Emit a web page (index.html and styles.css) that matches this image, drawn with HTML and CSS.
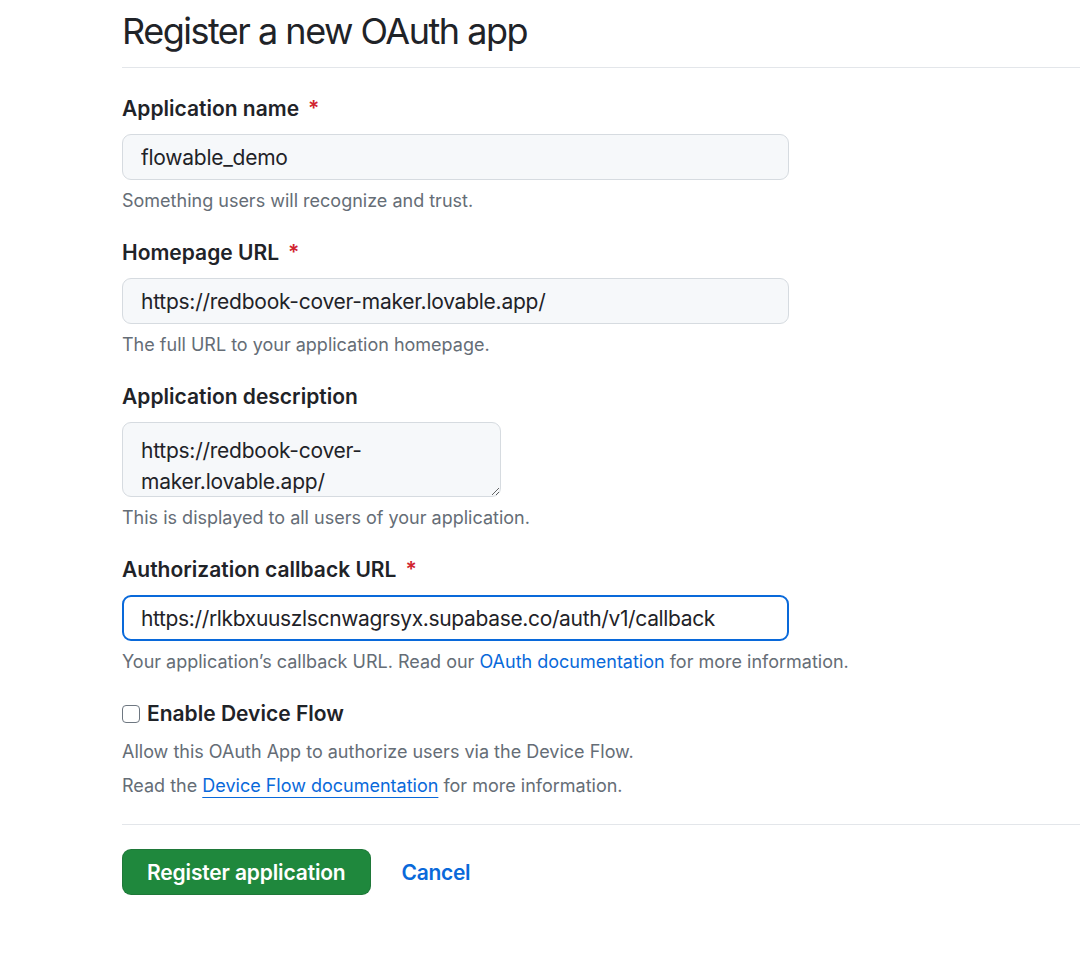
FILE: index.html
```html
<!DOCTYPE html>
<html lang="en">
<head>
<meta charset="utf-8">
<title>Register a new OAuth app</title>
<link rel="stylesheet" href="styles.css">
</head>
<body>
<div class="page">
  <div class="header">
    <h1 class="title">Register a new OAuth app</h1>
  </div>
  <form class="form">
    <div class="group">
      <label class="lbl">Application name<span class="req">*</span></label>
      <input class="field" type="text" value="flowable_demo">
      <p class="note">Something users will recognize and trust.</p>
    </div>
    <div class="group">
      <label class="lbl">Homepage URL<span class="req">*</span></label>
      <input class="field" type="text" value="https://redbook-cover-maker.lovable.app/">
      <p class="note">The full URL to your application homepage.</p>
    </div>
    <div class="group">
      <label class="lbl">Application description</label>
      <textarea class="area">https://redbook-cover-maker.lovable.app/</textarea>
      <p class="note">This is displayed to all users of your application.</p>
    </div>
    <div class="group">
      <label class="lbl">Authorization callback URL<span class="req">*</span></label>
      <input class="field focused" type="text" value="https://rlkbxuuszlscnwagrsyx.supabase.co/auth/v1/callback">
      <p class="note">Your application’s callback URL. Read our <a class="link" href="#">OAuth documentation</a> for more information.</p>
    </div>
    <div class="group check-group">
      <label class="check-lbl"><input class="box" type="checkbox"><span>Enable Device Flow</span></label>
      <p class="note">Allow this OAuth App to authorize users via the Device Flow.</p>
      <p class="note second">Read the <a class="link under" href="#">Device Flow documentation</a> for more information.</p>
    </div>
    <div class="actions">
      <button class="btn" type="button">Register application</button>
      <a class="cancel" href="#">Cancel</a>
    </div>
  </form>
</div>
</body>
</html>
```
FILE: styles.css
```css
* { box-sizing: border-box; }
html, body { margin: 0; padding: 0; background: #ffffff; }
body {
  font-family: Inter, "Liberation Sans", Arial, sans-serif;
  color: #1f2328;
}
.page {
  padding-left: 122px;
  padding-top: 4px;
}
.header {
  border-bottom: 1px solid #e3e6ea;
  padding-bottom: 9px;
}
.title {
  margin: 0;
  font-size: 36px;
  font-weight: 400;
  line-height: 54px;
  letter-spacing: -1.5px;
  color: #1f2328;
}
.form {
  padding-top: 26px;
}
.group {
  display: flex;
  flex-direction: column;
  align-items: flex-start;
  margin-bottom: 24px;
}
.lbl, .check-lbl {
  font-size: 21px;
  font-weight: 600;
  line-height: 30px;
  color: #1f2328;
}
.req {
  color: #d1242f;
  margin-left: 9px;
}
.field {
  margin-top: 10px;
  width: 667px;
  height: 46px;
  padding: 0 18px;
  border: 1px solid #d6dbe0;
  border-radius: 9px;
  background: #f6f8fa;
  font-family: inherit;
  font-size: 21px;
  letter-spacing: -0.25px;
  color: #1f2328;
  outline: none;
}
.field.focused {
  background: #ffffff;
  border: 2px solid #0969da;
  padding: 0 17px;
  letter-spacing: -0.35px;
}
.area {
  margin-top: 10px;
  width: 379px;
  height: 75px;
  padding: 12px 18px 0;
  border: 1px solid #d6dbe0;
  border-radius: 9px;
  background: #f6f8fa;
  font-family: inherit;
  font-size: 21px;
  line-height: 31px;
  letter-spacing: -0.25px;
  color: #1f2328;
  resize: both;
  overflow: hidden;
  outline: none;
}
.note {
  margin: 7px 0 0;
  font-size: 18px;
  line-height: 27px;
  color: #656d76;
}
.note.second { margin-top: 7px; }
.link {
  color: #0969da;
  text-decoration: none;
}
.link.under {
  text-decoration: underline;
  text-underline-offset: 5px;
  text-decoration-thickness: 1px;
}
.check-group { margin-bottom: 25px; }
.check-lbl {
  display: flex;
  align-items: center;
  gap: 7px;
}
.check-group .note:first-of-type { margin-top: 9px; }
.box {
  appearance: none;
  -webkit-appearance: none;
  margin: 0;
  width: 18px;
  height: 18px;
  border: 1.5px solid #6e7781;
  border-radius: 4px;
  background: #ffffff;
}
.actions {
  border-top: 1px solid #e3e6ea;
  padding-top: 24px;
  display: flex;
  align-items: center;
  gap: 31px;
}
.btn {
  height: 46px;
  padding: 0 24px;
  border: 1px solid rgba(31, 35, 40, 0.15);
  border-radius: 9px;
  background: #1f883d;
  color: #ffffff;
  font-family: inherit;
  font-size: 21px;
  font-weight: 600;
  letter-spacing: -0.15px;
}
.cancel {
  color: #0969da;
  font-size: 21px;
  font-weight: 600;
  letter-spacing: -0.3px;
  text-decoration: none;
}
```
